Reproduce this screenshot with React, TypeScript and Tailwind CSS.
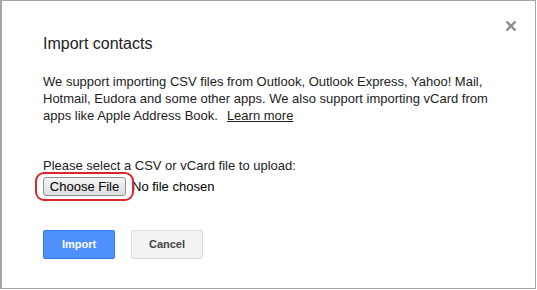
export default function App() {
  return (
    <div className="w-[537px] h-[290px] bg-white" style={{ fontFamily: '"Liberation Sans", Arial, sans-serif' }}>
      <div className="relative w-[536px] h-[289px] border border-[#a6a6a6] border-l-2 bg-white pl-[41px] pt-[33px]">
        <button className="absolute right-[16px] top-[17px] w-[16px] h-[16px] flex items-center justify-center">
          <svg width="12" height="12" viewBox="0 0 12 12">
            <path d="M1.5 1.5 L10.5 10.5 M10.5 1.5 L1.5 10.5" stroke="#8c8c8c" strokeWidth="2.4" />
          </svg>
        </button>
        <h1 className="text-[16px] leading-[20px] text-[#222]">Import contacts</h1>
        <p className="mt-[19px] w-[475px] text-[13px] leading-[17px] text-[#222]">
          We support importing CSV files from Outlook, Outlook Express, Yahoo! Mail, Hotmail, Eudora and some other apps. We also support importing vCard from apps like Apple Address Book.
          <a className="ml-[9px] underline">Learn more</a>
        </p>
        <p className="mt-[33px] text-[13px] leading-[17px] text-[#222]">Please select a CSV or vCard file to upload:</p>
        <div className="relative mt-[3px] flex items-center gap-[6px] h-[19px]">
          <span className="h-[19px] w-[83px] flex items-center justify-center rounded-[3px] border border-[#8f8f8f] bg-gradient-to-b from-[#f6f6f6] to-[#dedede] text-[13px] text-black">
            Choose File
          </span>
          <span className="text-[13px] text-black">No file chosen</span>
          <div className="absolute left-[-8px] top-[-5px] w-[99px] h-[29px] rounded-[9px] border-2 border-[#d9262f]" />
        </div>
        <div className="mt-[34px] flex gap-[16px]">
          <button className="w-[72px] h-[29px] rounded-[2px] border border-[#3079ed] bg-[#4d90fe] text-[11px] font-bold text-white">
            Import
          </button>
          <button className="w-[72px] h-[29px] rounded-[2px] border border-[#dcdcdc] bg-[#f3f3f3] text-[11px] font-bold text-[#444]">
            Cancel
          </button>
        </div>
      </div>
    </div>
  );
}
